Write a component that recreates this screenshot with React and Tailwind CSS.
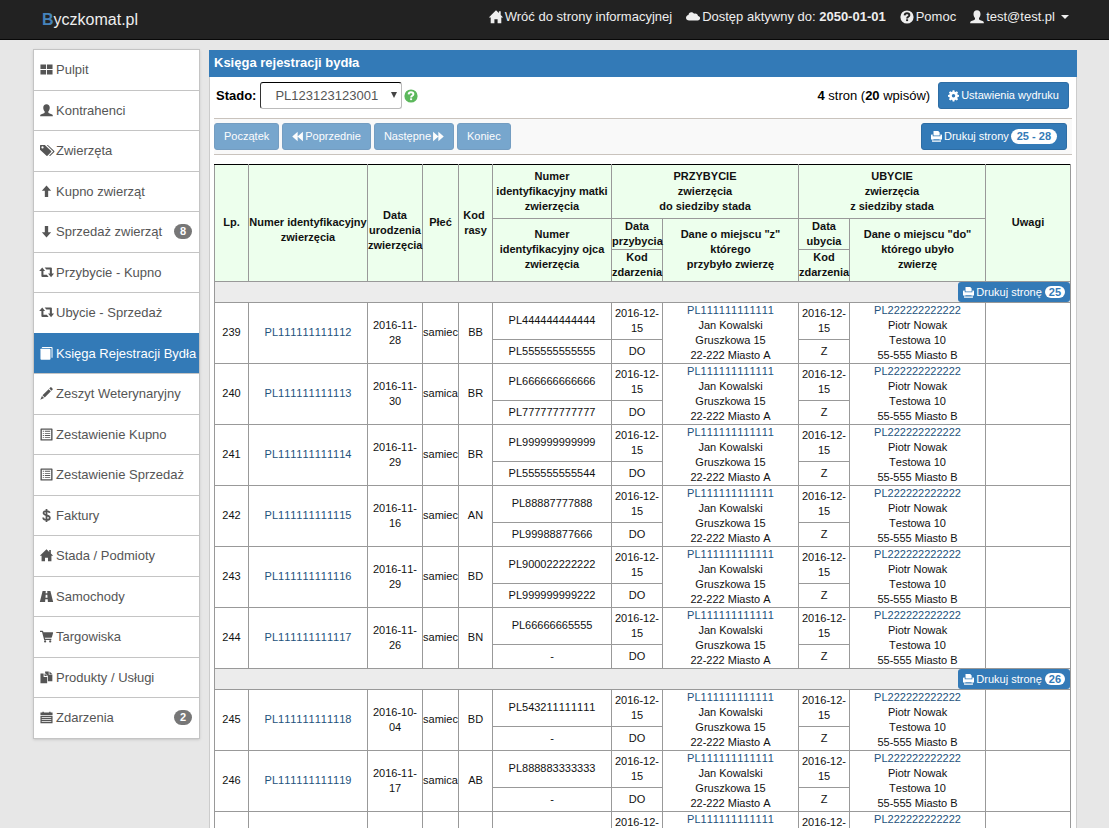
import { Fragment } from 'react'

const ICONS = {
  dashboard: <path d="M.5 1.500h6v5h-6zM7.500 1.500h6v5h-6zM.5 7.500h6v5h-6zM7.500 7.500h6v5h-6z" />,
  user: <path d="M7 .3c2.200 0 3.500 1.500 3.500 3.700 0 1.600-.6 3-1.500 3.900v1.200c0 .5.300.7.800.9l2.700 1.100c.9.400 1.300.8 1.300 1.600v.6H.2v-.6c0-.8.4-1.200 1.300-1.600L4.200 10c.5-.2.8-.4.8-.9V7.900C4.100 7 3.500 5.600 3.500 4 3.500 1.800 4.800.3 7 .3z" />,
  tags: (
    <>
      <path fillRule="evenodd" d="M0 1.700C0 1.200.3 1 .7 1h4.500L12 7.600c.3.300.3.700 0 1L8 12.700c-.3.300-.7.300-1 0L0 6.200zM2.700 2.500a1.200 1.200 0 1 0 0 2.400 1.200 1.200 0 0 0 0-2.400z" />
      <path d="M7.300 1h1.200l6.900 6.600c.3.300.3.700 0 1l-4.200 4.100c-.3.300-.7.300-1 0l-.3-.3 4.400-4.300z" />
    </>
  ),
  up: <path d="M7 .6l5 5.600H8.800v6.600H5.200V6.200H2z" />,
  down: <path d="M7 13.400l5-5.600H8.800V1.200H5.200v6.600H2z" />,
  swap: <path d="M2.400 1.500L5.500 5.500H3.700v4h3.700l1.900 2.300H2.500c-.6 0-1-.4-1-1V5.500H-.9zM5 1.500h6.800c.6 0 1 .4 1 1v5.500h2.300L11.900 12 8.700 8h1.900V3.800H6.800z" />,
  book: (
    <>
      <path d="M2.500 0h10.200c.4 0 .8.300.8.700v11h-1.100V1.200H1.800z" />
      <path d="M.8 2h9.500c.6 0 1 .4 1 1v9.600c0 .6-.4 1-1 1H1.500c-.6 0-1-.4-1-1V2.300z" />
    </>
  ),
  pencil: <path d="M11.200.4c.3-.3.700-.3 1 0l1.400 1.400c.3.300.3.700 0 1l-1.200 1.200L10 1.600zM9.300 2.300l2.400 2.400-6.600 6.600-2.400-2.400zM2.100 9.600l2.300 2.300L.3 13.700z" />,
  list: <path fillRule="evenodd" d="M1.200.5h11.600c.4 0 .7.300.7.700v11.600c0 .4-.3.700-.7.700H1.200c-.4 0-.7-.3-.7-.7V1.200c0-.4.300-.7.700-.7zM2 2v10h10V2zM3 3h1.200v1H3zM5.200 3H11v1H5.200zM3 5.300h1.200v1H3zM5.200 5.300H11v1H5.200zM3 7.600h1.200v1H3zM5.200 7.600H11v1H5.200zM3 9.900h1.200v1H3zM5.200 9.900H11v1H5.200z" />,
  dollar: (
    <path
      fill="none"
      stroke="currentColor"
      strokeWidth="1.900"
      d="M7 .1v13.800M10.400 4.200C10.200 2.800 8.800 2.200 7 2.200c-1.900 0-3.200.8-3.200 2.200 0 3.200 6.800 1.600 6.800 4.900 0 1.600-1.500 2.500-3.600 2.500-2.200 0-3.500-.9-3.600-2.600"
    />
  ),
  home: <path d="M7 .3l2.900 2.800V1.200h1.800v3.700l2.500 2.500h-1.900v5.900H8.600V9.300H5.400v4H1.700V7.400H-.2z" />,
  road: <path fillRule="evenodd" d="M2.800 1h3.400L6 3.500h2L7.800 1h3.400L14.200 13H8.500L8.300 10H5.700l-.2 3H-.2zM6.100 5L5.900 8.300h2.200L7.900 5z" />,
  cart: (
    <>
      <path d="M0 .8h2.700c.4 0 .6.200.7.600l.3 1.100h10c.3 0 .5.300.4.600l-1.300 4.800c-.1.300-.3.500-.7.500H5.200l.3 1.100h6.700v1.300H4.500L2.200 2.200H0z" />
      <circle cx="5.500" cy="12.300" r="1.200" />
      <circle cx="11" cy="12.300" r="1.200" />
    </>
  ),
  files: (
    <>
      <path d="M5.500.5h3.900v3.600h3.900v7H8.500V5.300L5.500 2.500zM10.200.5l3.200 2.900h-3.200z" />
      <path d="M.5 2.600h3.400v3.800h3.800v6.900H.5zM4.900 2.600l2.900 2.900H4.900z" />
    </>
  ),
  calendar: <path fillRule="evenodd" d="M.5 1.700h2.100V.8h1.500v.9h5.800V.8h1.500v.9h2.100v2.600H.5zM.5 5.200h13v8H.5zM1.800 6.700v.8h10.400v-.8zM1.800 8.900v.7h10.400v-.7zM1.800 11v.8h10.400V11z" />,
  cloud: <path d="M3.200 10.500C1.400 10.500 0 9.400 0 7.700 0 6.300 1.100 5.200 2.500 5 2.500 3.300 3.800 2.200 5.300 2.200c1.200 0 2.300.6 2.800 1.600.4-.2.700-.3 1.200-.3 1.500 0 2.600 1 2.700 2.500 1.200.1 2.100 1 2.100 2.100 0 1.400-1 2.400-2.500 2.400z" />,
  question: (
    <>
      <circle cx="7" cy="7" r="6.600" />
      <path fill="none" className="stroke-(--mark)" strokeWidth="1.900" d="M4.600 5.400c.1-1.400 1-2.100 2.400-2.100s2.400.7 2.400 1.900c0 1.700-2.300 1.500-2.300 3.200" />
      <path className="fill-(--mark)" d="M6.100 9.300h2v1.800h-2z" />
    </>
  ),
  cog: (
    <path
      fillRule="evenodd"
      d="M5.900.4h2.200l.4 1.800 1.100.5 1.600-1 1.600 1.600-1 1.600.5 1.100 1.700.4v2.200l-1.700.4-.5 1.100 1 1.600-1.600 1.600-1.600-1-1.100.5-.4 1.700H5.900l-.4-1.700-1.100-.5-1.600 1-1.600-1.600 1-1.600L1.700 9 0 8.600V6.400L1.700 6l.5-1.100-1-1.600 1.600-1.600 1.600 1 1.100-.5zM7 5.200a2.200 2.200 0 1 0 0 4.400 2.200 2.200 0 0 0 0-4.400z"
    />
  ),
  print: <path fillRule="evenodd" d="M3.200 0h6l1.800 1.800v4H3.200zM.8 4.500h1.400v2.300h9.700V4.500h1.300c.5 0 .8.300.8.800v5.500h-2.200l1 2.900H1.200l1-2.900H0V5.300c0-.5.300-.8.800-.8zM3 10.400l-.4 1.600h8.800l-.4-1.600z" />,
  backward: <path d="M7.200 1v12L.3 7zM13.900 1v12L7 7z" />,
  forward: <path d="M6.800 1v12L13.700 7zM.1 1v12L7 7z" />,
}

function Icon({ name, className = 'size-3.5' }) {
  return (
    <svg viewBox="0 0 14 14" fill="currentColor" aria-hidden="true" className={`shrink-0 overflow-visible ${className}`}>
      {ICONS[name]}
    </svg>
  )
}

const MENU = [
  { icon: 'dashboard', label: 'Pulpit' },
  { icon: 'user', label: 'Kontrahenci' },
  { icon: 'tags', label: 'Zwierzęta' },
  { icon: 'up', label: 'Kupno zwierząt' },
  { icon: 'down', label: 'Sprzedaż zwierząt', badge: 8 },
  { icon: 'swap', label: 'Przybycie - Kupno' },
  { icon: 'swap', label: 'Ubycie - Sprzedaż' },
  { icon: 'book', label: 'Księga Rejestracji Bydła', active: true },
  { icon: 'pencil', label: 'Zeszyt Weterynaryjny' },
  { icon: 'list', label: 'Zestawienie Kupno' },
  { icon: 'list', label: 'Zestawienie Sprzedaż' },
  { icon: 'dollar', label: 'Faktury' },
  { icon: 'home', label: 'Stada / Podmioty' },
  { icon: 'road', label: 'Samochody' },
  { icon: 'cart', label: 'Targowiska' },
  { icon: 'files', label: 'Produkty / Usługi' },
  { icon: 'calendar', label: 'Zdarzenia', badge: 2 },
]

const PAGES = [
  {
    page: 25,
    rows: [
      { lp: 239, id: 'PL111111111112', born: '2016-11-28', sex: 'samiec', breed: 'BB', mother: 'PL444444444444', father: 'PL555555555555' },
      { lp: 240, id: 'PL111111111113', born: '2016-11-30', sex: 'samica', breed: 'BR', mother: 'PL666666666666', father: 'PL777777777777' },
      { lp: 241, id: 'PL111111111114', born: '2016-11-29', sex: 'samiec', breed: 'BR', mother: 'PL999999999999', father: 'PL555555555544' },
      { lp: 242, id: 'PL111111111115', born: '2016-11-16', sex: 'samiec', breed: 'AN', mother: 'PL88887777888', father: 'PL99988877666' },
      { lp: 243, id: 'PL111111111116', born: '2016-11-29', sex: 'samiec', breed: 'BD', mother: 'PL900022222222', father: 'PL999999999222' },
      { lp: 244, id: 'PL111111111117', born: '2016-11-26', sex: 'samiec', breed: 'BN', mother: 'PL66666665555', father: '-' },
    ],
  },
  {
    page: 26,
    rows: [
      { lp: 245, id: 'PL111111111118', born: '2016-10-04', sex: 'samiec', breed: 'BD', mother: 'PL543211111111', father: '-' },
      { lp: 246, id: 'PL111111111119', born: '2016-11-17', sex: 'samica', breed: 'AB', mother: 'PL888883333333', father: '-' },
      { lp: 247, id: 'PL111111111120', born: '2016-11-17', sex: 'samica', breed: 'AB', mother: '-', father: '-' },
    ],
  },
]

function Navbar() {
  return (
    <header className="h-10 bg-[#222] border-b border-[#080808] pl-[42px] pr-10 flex items-start justify-between text-[#eee]">
      <a href="#" className="text-base leading-10"><b className="text-[#4583bb]">B</b>yczkomat.pl</a>
      <nav className="flex gap-3.5 text-[13px] leading-[34px]">
        <a href="#" className="flex items-center gap-0.5"><Icon name="home" />Wróć do strony informacyjnej</a>
        <a href="#" className="flex items-center gap-0.5"><Icon name="cloud" /><span>Dostęp aktywny do: <b>2050-01-01</b></span></a>
        <a href="#" className="flex items-center gap-0.5 [--mark:#222]"><Icon name="question" />Pomoc</a>
        <button className="flex items-center gap-0.5">
          <Icon name="user" />test@test.pl
          <span className="ml-1 border-x-4 border-x-transparent border-t-4 border-t-[#eee]" />
        </button>
      </nav>
    </header>
  )
}

function Sidebar() {
  return (
    <nav className="w-[167px] shrink-0 bg-white border-x border-b border-[#c4c4c4] shadow-sm text-[13px] leading-normal text-[#555]">
      {MENU.map(({ icon, label, badge, active }) => (
        <a
          key={label}
          href="#"
          className={`flex items-center gap-[3px] border-t pl-1.5 pr-[7px] py-2.5 whitespace-nowrap ${active ? 'bg-[#337ab7] border-[#337ab7] text-white' : 'border-[#c4c4c4]'}`}
        >
          <Icon name={icon} className="size-[13px]" />
          {label}
          {badge && (
            <span className="ml-auto h-[15px] px-1.5 rounded-full bg-[#777] text-white text-[11px] leading-[15px] font-bold">{badge}</span>
          )}
        </a>
      ))}
    </nav>
  )
}

function Button({ children, className = '', ...rest }) {
  return (
    <button
      className={`inline-flex items-center gap-0.5 h-[27px] rounded-[3px] border border-[#2e6da4] bg-[#337ab7] px-[9px] text-[11px] text-white whitespace-nowrap ${className}`}
      {...rest}
    >
      {children}
    </button>
  )
}

function PageHeading({ page }) {
  return (
    <tr>
      <td colSpan={11} className="h-[21px] bg-[#ececec] border border-[#999]">
        <div className="flex justify-end">
          <button className="flex items-center h-5 rounded-[3px] bg-[#337ab7] px-[5px] text-[11px] text-white">
            <Icon name="print" className="size-[11px] mr-0.5" />
            Drukuj stronę
            <span className="ml-[3px] h-3 px-1 rounded-full bg-white text-[#337ab7] text-[11px] leading-3 font-bold">{page}</span>
          </button>
        </div>
      </td>
    </tr>
  )
}

function AnimalRows({ lp, id, born, sex, breed, mother, father }) {
  const cell = 'border border-[#999]'
  return (
    <>
      <tr>
        <td rowSpan={2} className={`pb-px ${cell}`}>{lp}</td>
        <td rowSpan={2} className={`pb-px ${cell}`}><a href="#" className="text-[#23527c]">{id}</a></td>
        <td rowSpan={2} className={`pb-px ${cell}`}>{born}</td>
        <td rowSpan={2} className={`pb-px ${cell}`}>{sex}</td>
        <td rowSpan={2} className={`pb-px ${cell}`}>{breed}</td>
        <td className={`h-[37px] pb-px ${cell}`}>{mother}</td>
        <td className={cell}>2016-12-15</td>
        <td rowSpan={2} className={cell}>
          <a href="#" className="text-[#23527c]">PL111111111111</a><br />Jan Kowalski<br />Gruszkowa 15<br />22-222 Miasto A
        </td>
        <td className={cell}>2016-12-15</td>
        <td rowSpan={2} className={cell}>
          <a href="#" className="text-[#23527c]">PL222222222222</a><br />Piotr Nowak<br />Testowa 10<br />55-555 Miasto B
        </td>
        <td rowSpan={2} className={cell} />
      </tr>
      <tr>
        <td className={`h-6 ${cell}`}>{father}</td>
        <td className={cell}>DO</td>
        <td className={cell}>Z</td>
      </tr>
    </>
  )
}

function RegisterTable() {
  const head = 'border border-[#999] bg-[#edffed]'
  return (
    <table className="w-full table-fixed border-collapse border border-black text-[11px] leading-[15px] text-center text-[#111] [font-kerning:none]">
      <colgroup>
        <col className="w-[34px]" />
        <col className="w-[119px]" />
        <col className="w-[55px]" />
        <col className="w-[36px]" />
        <col className="w-[34px]" />
        <col className="w-[119px]" />
        <col className="w-[51px]" />
        <col className="w-[136px]" />
        <col className="w-[51px]" />
        <col className="w-[136px]" />
        <col className="w-[85px]" />
      </colgroup>
      <thead>
        <tr>
          <th rowSpan={3} className={`pb-px ${head} border-t-black`}>Lp.</th>
          <th rowSpan={3} className={`pt-3.5 ${head} border-t-black`}>Numer identyfikacyjny zwierzęcia</th>
          <th rowSpan={3} className={`pt-3.5 ${head} border-t-black`}>Data<br />urodzenia<br />zwierzęcia</th>
          <th rowSpan={3} className={`pb-px ${head} border-t-black`}>Płeć</th>
          <th rowSpan={3} className={`pb-px ${head} border-t-black`}>Kod&nbsp;<br />rasy</th>
          <th className={`h-[54px] ${head} border-t-black`}>Numer<br />identyfikacyjny matki<br />zwierzęcia</th>
          <th colSpan={2} className={`${head} border-t-black`}>PRZYBYCIE<br />zwierzęcia<br />do siedziby stada</th>
          <th colSpan={2} className={`${head} border-t-black`}>UBYCIE<br />zwierzęcia<br />z siedziby stada</th>
          <th rowSpan={3} className={`pb-px ${head} border-t-black`}>Uwagi</th>
        </tr>
        <tr>
          <th rowSpan={2} className={`pb-px ${head}`}>Numer<br />identyfikacyjny ojca<br />zwierzęcia</th>
          <th className={`h-[31px] ${head}`}>Data<br />przybycia</th>
          <th rowSpan={2} className={`pb-px ${head}`}>Dane o miejscu "z"<br />którego<br />przybyło zwierzę</th>
          <th className={head}>Data<br />ubycia</th>
          <th rowSpan={2} className={`pb-px ${head}`}>Dane o miejscu "do"<br />którego ubyło<br />zwierzę</th>
        </tr>
        <tr>
          <th className={`h-8 pb-px ${head}`}>Kod<br />zdarzenia</th>
          <th className={`pb-px ${head}`}>Kod<br />zdarzenia</th>
        </tr>
      </thead>
      <tbody>
        {PAGES.map(({ page, rows }) => (
          <Fragment key={page}>
            <PageHeading page={page} />
            {rows.map(row => <AnimalRows key={row.lp} {...row} />)}
          </Fragment>
        ))}
      </tbody>
    </table>
  )
}

export default function App() {
  return (
    <div className="min-h-screen bg-[#e7e7e7] font-['Liberation_Sans',Arial,sans-serif] text-black">
      <Navbar />
      <div className="flex items-start gap-[9px] pt-[9px] pl-[33px] pr-8">
        <Sidebar />
        <main className="flex-1 min-w-0 mt-px bg-white border-x border-[#ccc]">
          <h1 className="-mx-px h-[27px] bg-[#337ab7] pl-[5px] text-[13px] leading-[26px] font-bold text-white">Księga rejestracji bydła</h1>

          <div className="flex items-center h-[41px] pl-1.5 pr-[7px] pb-1 text-[13px]">
            <label htmlFor="stado" className="font-bold">Stado:</label>
            <div className="relative ml-1">
              <select id="stado" className="block appearance-none w-[142px] h-[27px] rounded-[3px] border border-t-black border-l-[#333] border-r-[#bbb] border-b-[#bbb] bg-white pl-3.5 text-[13px] text-[#555]">
                <option>PL123123123001</option>
              </select>
              <svg viewBox="0 0 6 6" className="pointer-events-none absolute right-[5px] top-2.5 size-1.5 fill-[#444]"><path d="M0 0h6L3 6z" /></svg>
            </div>
            <button aria-label="Pomoc" className="ml-0.5 mt-px text-[#5cb85c] [--mark:#fff]"><Icon name="question" /></button>
            <p className="ml-auto mr-2"><b>4</b> stron (<b>20</b> wpisów)</p>
            <Button><Icon name="cog" className="size-[11px]" />Ustawienia wydruku</Button>
          </div>

          <div className="mx-1 flex items-center gap-[3px] h-[37px] border-y border-[#c9c3bd] bg-[#f9f9f9] pr-[5px]">
            <Button disabled className="opacity-65">Początek</Button>
            <Button disabled className="opacity-65"><Icon name="backward" className="size-[11px]" />Poprzednie</Button>
            <Button disabled className="opacity-65">Następne<Icon name="forward" className="size-[11px]" /></Button>
            <Button disabled className="opacity-65">Koniec</Button>
            <Button className="ml-auto">
              <Icon name="print" className="size-[11px]" />Drukuj strony
              <span className="h-[15px] px-1.5 rounded-full bg-white text-[#337ab7] text-[11px] leading-[15px] font-bold">25 - 28</span>
            </Button>
          </div>

          <div className="pt-[9px] pl-1 pr-[5px]">
            <RegisterTable />
          </div>
        </main>
      </div>
    </div>
  )
}
